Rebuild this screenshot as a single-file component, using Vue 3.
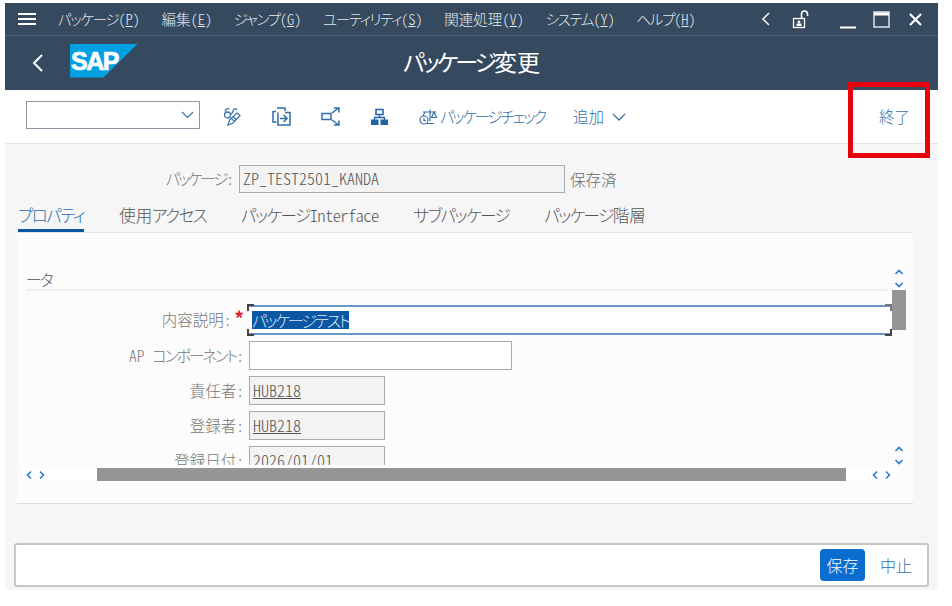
<script setup>
import { h } from 'vue'

const menus = [
  { label: 'パッケージ', key: 'P' },
  { label: '編集', key: 'E' },
  { label: 'ジャンプ', key: 'G' },
  { label: 'ユーティリティ', key: 'S' },
  { label: '関連処理', key: 'V' },
  { label: 'システム', key: 'Y' },
  { label: 'ヘルプ', key: 'H' }
]

const tabs = ['プロパティ', '使用アクセス', 'パッケージInterface', 'サブパッケージ', 'パッケージ階層']

// the katakana in the original UI font is much narrower than the kanji
const kanaRe = /([\u30a0-\u30ff]+)/
const segClass = (s) => (kanaRe.test(s) ? 'kana' : /^[A-Za-z]+$/.test(s) ? 'latin' : null)
const K = (props) =>
  props.t.split(kanaRe).filter(Boolean).map((s) => h('span', { class: segClass(s) }, s))
K.props = ['t']
</script>

<template>
  <div class="window">
    <header class="shell">
      <div class="menu-row">
        <svg class="hamburger" width="18" height="14" viewBox="0 0 18 14">
          <path d="M0 2h18M0 7h18M0 12h18" stroke="#fff" stroke-width="2" fill="none" />
        </svg>
        <nav class="menus">
          <span v-for="m in menus" :key="m.key"><K :t="m.label" />(<u>{{ m.key }}</u>)</span>
        </nav>
        <div class="win-btns">
          <svg class="w-back" width="10" height="14" viewBox="0 0 10 14">
            <path d="M8 1L2 7l6 6" stroke="#e8edf2" stroke-width="1.6" fill="none" />
          </svg>
          <svg class="w-lock" width="18" height="19" viewBox="0 0 18 19">
            <rect x="1.5" y="8.5" width="11" height="9" fill="none" stroke="#fff" stroke-width="1.3" />
            <path d="M9.5 8V4a3 3 0 0 1 6 0v2" fill="none" stroke="#fff" stroke-width="1.6" />
            <circle cx="7" cy="12" r="1.4" fill="#fff" />
            <rect x="4.5" y="13.5" width="5" height="2.5" fill="#fff" />
          </svg>
          <svg class="w-min" width="18" height="18" viewBox="0 0 18 18">
            <path d="M1 16.5h16" stroke="#fff" stroke-width="2" />
          </svg>
          <svg class="w-max" width="17" height="17" viewBox="0 0 17 17">
            <rect x="1" y="1" width="15" height="15" fill="none" stroke="#dfe5ea" stroke-width="1.5" />
            <path d="M1 3h15" stroke="#fff" stroke-width="3" />
          </svg>
          <svg class="w-close" width="13" height="13" viewBox="0 0 13 13">
            <path d="M1 1l11 11M12 1L1 12" stroke="#fff" stroke-width="2.2" />
          </svg>
        </div>
      </div>
      <div class="title-row">
        <div class="title-left">
          <svg class="back" width="12" height="20" viewBox="0 0 12 20">
            <path d="M10 2L2 10l8 8" stroke="#fff" stroke-width="2" fill="none" />
          </svg>
          <svg class="logo" width="68" height="34" viewBox="0 0 68 34">
            <path d="M0 0h67.500L33.500 33.500H0z" fill="#00a0e2" />
            <text x="1" y="26" class="logo-text">SAP</text>
          </svg>
        </div>
        <div class="title"><K t="パッケージ変更" /></div>
      </div>
    </header>

    <div class="toolbar">
      <div class="dropdown">
        <svg width="13" height="8" viewBox="0 0 13 8">
          <path d="M1 1l5.500 5.500L12 1" stroke="#3f74a8" stroke-width="1.200" fill="none" />
        </svg>
      </div>
      <svg class="tool t1" width="19" height="19" viewBox="0 0 19 19" fill="none" stroke="#3a74ad" stroke-width="1.300">
        <circle cx="4.500" cy="8" r="3" />
        <path d="M2 4.500C2.500 2 5 1 6.500 2M7.500 7c1.500 0 2-1 2.500-3 .5-2.500 3-3 4-1" />
        <path d="M5 18l1.500-5L14 6l3 2.500L10 16z" />
        <path d="M8 11l3 3M10 9.500l3 3" />
      </svg>
      <svg class="tool t2" width="19" height="19" viewBox="0 0 19 19" fill="none" stroke="#2f6ea9" stroke-width="1.500">
        <path d="M5 1h8v3M1 4.500h3M1 4v11h3.500M6 5.500V18h12V5.500H13" />
        <path d="M8 11.500h7M11.500 8l3.500 3.500-3.500 3.500" />
      </svg>
      <svg class="tool t3" width="19" height="19" viewBox="0 0 19 19" fill="none" stroke="#2f6ea9" stroke-width="1.500">
        <rect x="1" y="6.500" width="9" height="6" />
        <path d="M11 6l6-4.500M13 1h5v4.500M11 13l6 4.500M13 18h5v-4.500" />
      </svg>
      <svg class="tool t4" width="17" height="17" viewBox="0 0 17 17">
        <path d="M5 1.500h7v5H5z" fill="none" stroke="#1f63a5" stroke-width="1.500" />
        <path d="M8.500 6.500v3M3.500 12V9.500h10V12" fill="none" stroke="#1f63a5" stroke-width="1.300" />
        <rect x="0" y="11.500" width="7.500" height="5.500" fill="#1f63a5" />
        <rect x="9.500" y="11.500" width="7.500" height="5.500" fill="#1f63a5" />
      </svg>
      <button class="tool-text check">
        <svg width="19" height="18" viewBox="0 0 19 18" fill="none" stroke="#3a74ad" stroke-width="1.200">
          <circle cx="5" cy="12" r="4" />
          <path d="M5 10v2.500h2" />
          <path d="M4 4h13M11 1.500V13M8 15.500h7" />
          <path d="M6 4l-2 4M15 4l-2.500 5.500h5z" />
        </svg>
        <span><K t="パッケージチェック" /></span>
      </button>
      <button class="tool-text add">
        <span>追加</span>
        <svg width="14" height="8" viewBox="0 0 14 8">
          <path d="M1 1l6 6 6-6" stroke="#3a74ad" stroke-width="1.300" fill="none" />
        </svg>
      </button>
      <button class="tool-text exit"><span>終了</span></button>
    </div>

    <main class="content">
      <div class="pkg-row">
        <label><K t="パッケージ" />:</label>
        <div class="field readonly pkg-field">ZP_TEST2501_KANDA</div>
        <span class="status">保存済</span>
      </div>

      <div class="tabs">
        <span v-for="(t, i) in tabs" :key="t" class="tab" :class="{ active: i === 0 }"><K :t="t" /></span>
      </div>

      <section class="panel">
        <div class="scroller">
          <div class="form-area">
            <div class="section-title"><K t="ータ" /></div>
            <div class="form">
              <label>内容説明:<span class="req">*</span></label>
              <div class="field focused">
                <span class="sel"><K t="パッケージテスト" /></span>
                <i class="corner tl"></i><i class="corner bl"></i><i class="corner tr"></i><i class="corner br"></i>
              </div>

              <label>AP <K t="コンポーネント" />:</label>
              <div class="field medium"></div>

              <label>責任者:</label>
              <div class="field readonly short"><u>HUB218</u></div>

              <label>登録者:</label>
              <div class="field readonly short"><u>HUB218</u></div>

              <label>登録日付:</label>
              <div class="field readonly short">2026/01/01</div>
            </div>
          </div>
          <div class="vscroll">
            <svg width="10" height="19" viewBox="0 0 10 19" class="arrows">
              <path d="M1.500 5L5 1.500 8.500 5" /><path d="M1.500 14L5 17.500 8.500 14" />
            </svg>
            <div class="vthumb"></div>
            <div class="vspace"></div>
            <svg width="10" height="19" viewBox="0 0 10 19" class="arrows">
              <path d="M1.500 5L5 1.500 8.500 5" /><path d="M1.500 14L5 17.500 8.500 14" />
            </svg>
          </div>
        </div>
        <div class="hscroll">
          <div class="hend left">
            <svg width="19" height="10" viewBox="0 0 19 10" class="arrows">
              <path d="M5 1.500L1.500 5 5 8.500" /><path d="M14 1.500L17.500 5 14 8.500" />
            </svg>
          </div>
          <div class="hthumb"></div>
          <div class="hend right">
            <svg width="19" height="10" viewBox="0 0 19 10" class="arrows">
              <path d="M5 1.500L1.500 5 5 8.500" /><path d="M14 1.500L17.500 5 14 8.500" />
            </svg>
          </div>
        </div>
      </section>

      <footer class="footer">
        <button class="save">保存</button>
        <button class="cancel">中止</button>
      </footer>
    </main>

    <div class="highlight"></div>
  </div>
</template>

<style>
html, body {
  margin: 0;
  background: #fff;
}

.kana {
  letter-spacing: -0.09em;
}

.title .kana {
  letter-spacing: -0.13em;
}

.tool-text .kana,
.form .kana,
.pkg-row .kana {
  letter-spacing: -0.14em;
}

.tab .latin {
  letter-spacing: -0.6px;
}
</style>

<style scoped>
.window {
  position: relative;
  width: 933px;
  height: 587px;
  margin: 3px 0 0 5px;
  display: flex;
  flex-direction: column;
  background: #f6f6f6;
  font-family: "Noto Sans CJK JP", "Liberation Sans", sans-serif;
  font-feature-settings: "palt", "hwid";
  font-weight: 300;
  color: #555;
}

.shell {
  background: #354a5f;
  color: #fff;
}

.menu-row {
  height: 32px;
  display: flex;
  align-items: center;
  border-bottom: 1px solid #4e6882;
  padding-left: 13px;
}

.hamburger {
  margin-right: 22px;
}

.menus {
  display: flex;
  gap: 21.500px;
  font-size: 14.500px;
  color: #e3e8ed;
  margin-top: -2px;
}

.win-btns {
  margin-left: auto;
  display: flex;
  align-items: center;
}

.w-back { margin-right: 21px; }
.w-lock { margin-right: 29px; }
.w-min { margin-right: 16px; margin-top: 1px; }
.w-max { margin-right: 19px; }
.w-close { margin-right: 16px; }

.title-row {
  height: 54px;
  display: grid;
  grid-template-columns: 1fr auto 1fr;
  align-items: center;
}

.title-left {
  display: flex;
  align-items: center;
  padding-left: 27px;
  gap: 26px;
}

.logo {
  margin-top: -4px;
}

.logo-text {
  font-family: "Liberation Sans", sans-serif;
  font-size: 25px;
  font-weight: 700;
  fill: #fff;
  stroke: #fff;
  stroke-width: 0.7px;
  letter-spacing: -1.500px;
}

.title {
  font-size: 23px;
  font-weight: 400;
  color: #fff;
  margin-top: -4px;
}

.toolbar {
  height: 53px;
  background: #fff;
  border-bottom: 1px solid #e4e4e4;
  display: flex;
  align-items: center;
  padding-left: 21px;
  padding-right: 28px;
  flex-shrink: 0;
}

.dropdown {
  width: 167px;
  height: 26px;
  border: 1px solid #8b97a3;
  background: #fff;
  display: flex;
  align-items: center;
  justify-content: flex-end;
  padding-right: 5px;
  margin-right: 23px;
  margin-bottom: 4px;
}

.tool {
  flex-shrink: 0;
}

.t1 { margin-right: 30px; }
.t2 { margin-right: 30px; }
.t3 { margin-right: 31px; }
.t4 { margin-right: 31px; }

.tool-text {
  border: 0;
  background: none;
  padding: 0;
  font: inherit;
  font-feature-settings: inherit;
  font-size: 15.500px;
  color: #2f6ea9;
  display: flex;
  align-items: center;
  gap: 2px;
}

.tool-text span {
  margin-top: -2px;
}

.add {
  margin-left: 28px;
  gap: 8px;
}

.exit {
  margin-left: auto;
}

.content {
  flex: 1;
  display: flex;
  flex-direction: column;
  padding: 21px 9px 3px 9px;
  min-height: 0;
}

.pkg-row {
  display: flex;
  align-items: center;
  height: 28px;
  font-size: 15.500px;
  padding-left: 144px;
}

.pkg-row label {
  width: 76px;
  text-align: right;
  margin-right: 5px;
  margin-top: -2px;
  white-space: nowrap;
  color: #777;
}

.field {
  box-sizing: border-box;
  border: 1px solid #a4adb6;
  background: #fff;
  height: 29px;
  display: flex;
  align-items: center;
  padding: 0 0 2px 3px;
  font-size: 16px;
  color: #555;
}

.readonly {
  background: #f3f3f3;
}

.pkg-field {
  width: 326px;
  height: 28px;
}

.status {
  margin-left: 5px;
  margin-top: -1px;
  color: #666;
}

.tabs {
  margin: 12px 16px 0 4px;
  height: 28px;
  display: flex;
  gap: 35px;
  font-size: 16.500px;
  box-sizing: border-box;
  border-bottom: 1px solid #e4e4e4;
}

.tab {
  position: relative;
  color: #555;
  white-space: nowrap;
  line-height: 20px;
  height: 27px;
}

.tab.active {
  color: #2a6cab;
  border-bottom: 3px solid #0a57a4;
  box-sizing: border-box;
}

.panel {
  margin: 0 16px 0 3px;
  height: 271px;
  box-sizing: border-box;
  background: #fcfcfc;
  border-bottom: 1px solid #dcdcdc;
  flex-shrink: 0;
}

.scroller {
  height: 232px;
  display: flex;
  overflow: hidden;
}

.form-area {
  flex: 1;
  min-width: 0;
}

.section-title {
  margin: 33px 5px 0 9px;
  height: 23px;
  line-height: 26px;
  font-size: 15.500px;
  border-bottom: 2px solid #efefef;
}

.form {
  display: grid;
  grid-template-columns: 227px 1fr;
  column-gap: 5px;
  row-gap: 6px;
  margin-top: 14px;
  align-items: center;
  font-size: 15.500px;
}

.form label {
  text-align: right;
  color: #777;
  white-space: nowrap;
  margin-top: -2px;
}

.req {
  color: #e02020;
  font-size: 19px;
  line-height: 0;
  font-weight: 700;
  margin-left: 3px;
}

.focused {
  position: relative;
  border-width: 2px 0;
  border-color: #6a96c8;
  height: 30px;
  padding-bottom: 0;
  margin-right: 2px;
}

.sel {
  background: #0b57a3;
  color: #dfe9f3;
  line-height: 18px;
}

.corner {
  position: absolute;
  width: 5px;
  height: 5px;
  border: 0 solid #444;
}

.tl { left: -2px; top: -3px; border-width: 2px 0 0 2px; }
.bl { left: -2px; bottom: -3px; border-width: 0 0 2px 2px; }
.tr { right: -2px; top: -3px; border-width: 2px 2px 0 0; border-color: #777; }
.br { right: -2px; bottom: -3px; border-width: 0 2px 2px 0; }

.medium { width: 263px; }
.short { width: 136px; }

.vscroll {
  width: 21px;
  display: flex;
  flex-direction: column;
  align-items: center;
  flex-shrink: 0;
  padding-top: 36px;
  padding-right: 7px;
  box-sizing: border-box;
}

.arrows {
  fill: none;
  stroke: #2b7bd0;
  stroke-width: 1.600;
  flex-shrink: 0;
}

.vthumb {
  width: 14px;
  height: 40px;
  margin-top: 2px;
  background: #959595;
  flex-shrink: 0;
}

.vspace {
  height: 116px;
  flex-shrink: 0;
}

.hscroll {
  margin-top: 3px;
  height: 13px;
  display: flex;
  padding-left: 6px;
  padding-right: 21px;
}

.hend {
  background: #fff;
  display: flex;
  align-items: center;
}

.hend.left {
  width: 74px;
  padding-left: 3px;
  box-sizing: border-box;
}

.hend.right {
  width: 46px;
  justify-content: flex-end;
  padding-right: 1px;
  box-sizing: border-box;
}

.hthumb {
  flex: 1;
  background: #959595;
}

.footer {
  margin-top: 39px;
  height: 44px;
  box-sizing: border-box;
  border: 2px solid #c6c6c6;
  border-radius: 3px;
  background: #fff;
  display: flex;
  align-items: center;
  justify-content: flex-end;
  padding-right: 15px;
}

.save, .cancel {
  border: 0;
  font: inherit;
  font-feature-settings: inherit;
  font-size: 16px;
}

.save {
  width: 45px;
  height: 32px;
  border-radius: 4px;
  background: #0a6ed1;
  color: #fff;
  padding: 0;
}

.cancel {
  background: none;
  color: #2f6ea9;
  margin-left: 15px;
  padding: 0;
}

.highlight {
  position: absolute;
  left: 843px;
  top: 79px;
  width: 82px;
  height: 76px;
  box-sizing: border-box;
  border: 5px solid #e8000b;
  pointer-events: none;
}
</style>
